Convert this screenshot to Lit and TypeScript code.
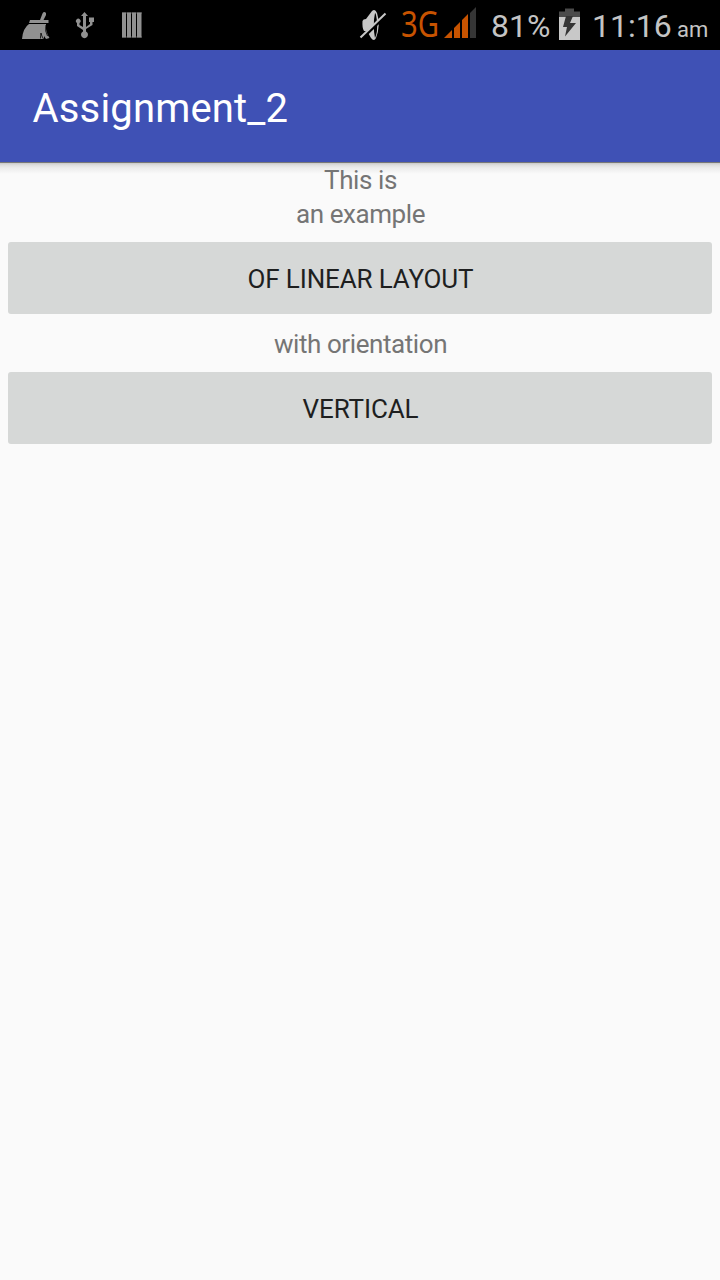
import { LitElement, html, css } from "lit";
import { customElement } from "lit/decorators.js";

@customElement("status-bar")
class StatusBar extends LitElement {
  static styles = css`
    :host { display: flex; height: 50px; background: #000; color: #c4c4c4;
      font-family: Roboto, "Noto Sans", sans-serif; white-space: nowrap; }
    svg { display: block; height: 50px; flex: none; }
    .left { width: 150px; }
    .mute { width: 36px; margin-left: 205px; }
    .network { width: 46px; height: 50px; flex: none; margin-left: 10px; color: #c75300;
      font: 400 37px/46px "Noto Sans", sans-serif; }
    .network span { display: inline-block; transform: scaleX(.79); transform-origin: 0 50%; }
    .signal { width: 36px; margin-left: -5px; }
    .percent { width: 63px; margin-left: 13px; flex: none; font-size: 32px; line-height: 53px; font-weight: 400; }
    .battery { width: 24px; margin-left: 4px; }
    .clock { width: 84px; margin-left: 10px; flex: none; font-size: 32px; line-height: 53px; font-weight: 400; }
    .ampm { margin-left: 1px; font-size: 22px; line-height: 59px; font-weight: 400; }
  `;
  render() {
    return html`
      <svg class="left" viewBox="0 0 150 50" fill="#919191">
        <path d="M30 20H40L42.500 13.500Q44 11 46 13V15L43.500 20H48.500V23H29Z"/>
        <path d="M29 24H46Q45 31 49.500 38L46 39 44 36V39H22Q23 28 29 24Z"/>
        <path d="M40.500 38.500Q40.500 35 41 33Q41.500 36 43.500 39M46 25Q44.500 31 47.500 36" fill="none" stroke="#000" stroke-width=".8"/>
        <path d="M84.500 12L88 16H86V27L90 24V22H89V17.500H94V22H92.500V25L86 29V31.500A3.500 3.500 0 1 1 83 31.500V30L77 26V23A2.300 2.300 0 1 1 79.500 23V25L83 27V16H81Z"/>
        <path d="M122 12.500h4v25h-4zM127 12.500h4v25h-4zM132 12.500h4v25h-4zM137 12.500h4.500v25H137z"/>
        <path d="M122 13H142M122 37H142" stroke="#919191" stroke-width="1.200" opacity=".6"/>
      </svg>
      <svg class="mute" viewBox="355 0 36 50">
        <path d="M362.500 21Q363 19 366 19L372 11Q375 8 377 13Q381 25 376 38Q374 42 371 38L367 31H364Q362 28 362.500 21Z" fill="#c8c8c8"/>
        <path d="M375 13Q372.500 25 375 38Q378 32 376.800 20Q376 13 375 13Z" fill="#000"/>
        <path d="M361 39L387 14" stroke="#000" stroke-width="3.500"/>
        <path d="M360.500 37.500L385.500 13.500" stroke="#c8c8c8" stroke-width="2"/>
      </svg>
      <div class="network"><span>3G</span></div>
      <svg class="signal" viewBox="442 0 36 50">
        <path d="M444 38L452 30V38ZM454 28L460 22V38H454ZM462 20L468 14V38H462Z" fill="#c75300"/>
        <path d="M470 13L476 7V38H470Z" fill="#353535"/>
      </svg>
      <div class="percent">81%</div>
      <svg class="battery" viewBox="558 0 24 50">
        <path d="M559 17H580V40H559Z" fill="#c8c8c8"/>
        <path d="M559 11.500H565V8.500H574V11.500H580V17H559Z" fill="#4b4b4b"/>
        <path d="M566 16H573L570 23H576L565 36.500L567 27H563Z" fill="#353535"/>
      </svg>
      <div class="clock">11:16</div><div class="ampm">am</div>`;
  }
}

@customElement("app-root")
class AppRoot extends LitElement {
  static styles = css`
    :host { display: flex; flex-direction: column; height: 1280px; overflow: hidden;
      background: #fafafa; font-family: Roboto, "Noto Sans", sans-serif; }
    .toolbar { height: 112px; box-sizing: border-box; padding-left: 32.5px; background: #3f51b5; color: #fff;
      font-size: 40px; line-height: 117px; letter-spacing: .17px; }
    .shadow { height: 12px; margin-bottom: -12px;
      background: linear-gradient(#777 0 1px, #c9c9c9 1px, #dedede 3px, #ececec 6px, #fafafa 12px); }
    .content { position: relative; display: flex; flex-direction: column; padding: 1px 8px 0; }
    .label { height: 34px; padding-left: 1px; text-align: center; font-size: 26px; line-height: 34px; letter-spacing: -.42px; color: #757575; }
    .button { height: 72px; margin: 11px 0 13px; padding: 0 0 0 1px; border: 0; border-radius: 3px; background: #d6d8d7; color: #1e1f1f;
      font: 400 26px/75px Roboto, "Noto Sans", sans-serif; letter-spacing: -.13px; }
  `;
  render() {
    return html`
      <status-bar></status-bar>
      <div class="toolbar"><span>Assignment_2</span></div>
      <div class="shadow"></div>
      <div class="content">
        <div class="label">This is</div>
        <div class="label">an example</div>
        <button class="button">OF LINEAR LAYOUT</button>
        <div class="label">with orientation</div>
        <button class="button">VERTICAL</button>
      </div>`;
  }
}
